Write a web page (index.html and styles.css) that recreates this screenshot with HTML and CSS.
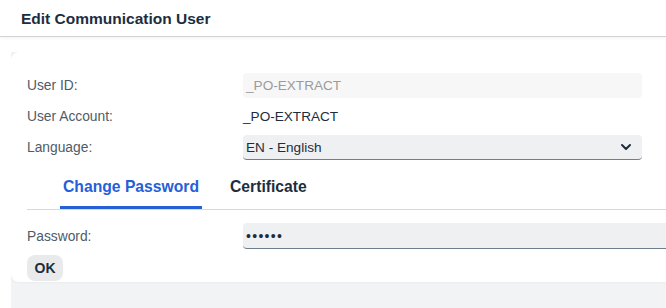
FILE: index.html
```html
<!DOCTYPE html>
<html lang="en">
<head>
    <meta charset="UTF-8">
    <meta name="viewport" content="width=device-width, initial-scale=1.0">
    <title>Edit Communication User</title>
    <link rel="stylesheet" href="styles.css">
</head>
<body>
    <header class="dialog-header">Edit Communication User</header>

    <div class="page">
        <div class="card">
            <div class="form-grid">
                <label class="label">User ID:</label>
                <div class="field field-disabled">_PO-EXTRACT</div>

                <label class="label">User Account:</label>
                <div class="value">_PO-EXTRACT</div>

                <label class="label">Language:</label>
                <div class="field field-select">
                    <span>EN - English</span>
                    <svg class="chevron" width="12" height="8" viewBox="0 0 12 8">
                        <path d="M2 2 L6 6 L10 2" fill="none" stroke="#1d2d3e" stroke-width="2" stroke-linecap="round" stroke-linejoin="round"/>
                    </svg>
                </div>
            </div>

            <div class="tabs">
                <div class="tab tab-active">Change Password</div>
                <div class="tab">Certificate</div>
            </div>

            <div class="password-row">
                <label class="label">Password:</label>
                <div class="field field-password">&bull;&bull;&bull;&bull;&bull;&bull;</div>
            </div>

            <button class="btn">OK</button>
        </div>
    </div>
</body>
</html>
```

FILE: styles.css
```css
html, body {
    margin: 0;
    height: 100%;
    overflow: hidden;
}
body {
    font-family: 'Liberation Sans', Arial, sans-serif;
    color: #1d2d3e;
    background: #ffffff;
}
.dialog-header {
    height: 36px;
    line-height: 37px;
    padding-left: 21px;
    font-size: 15.5px;
    font-weight: bold;
    border-bottom: 1px solid #d3d3d3;
    box-shadow: 0 2px 3px rgba(0, 0, 0, 0.04);
}
.page {
    margin-top: 15px;
    margin-left: 11px;
    height: 256px;
    background: #f2f3f5;
    overflow: hidden;
}
.card {
    width: 700px;
    background: #ffffff;
    border-radius: 8px 0 0 8px;
    box-shadow: 0 0 3px rgba(0, 0, 0, 0.06);
    padding: 21px 0 1px 16px;
}
.form-grid {
    display: grid;
    grid-template-columns: 216px 399px;
    grid-template-rows: 25px 37px 25px;
    align-items: center;
}
.label {
    font-size: 13.8px;
    color: #4f5b67;
}
.value {
    font-size: 13.6px;
}
.field {
    height: 25px;
    box-sizing: border-box;
    border-radius: 4px;
    font-size: 13.6px;
    display: flex;
    align-items: center;
    padding-left: 3px;
}
.field-disabled {
    background: #f7f7f7;
    color: #9b9b9b;
}
.field-select {
    background: #eef0f1;
    border-bottom: 1px solid #6d7f91;
    justify-content: space-between;
    padding-right: 10px;
}
.chevron {
    display: block;
}
.tabs {
    display: flex;
    gap: 25px;
    margin-top: 17px;
    padding-left: 33px;
    border-bottom: 1px solid #d9d9d9;
}
.tab {
    font-size: 15.7px;
    font-weight: bold;
    line-height: 20px;
    padding: 0 3px 9px;
    border-bottom: 3px solid transparent;
}
.tab-active {
    color: #2560d8;
    border-bottom-color: #2560d8;
}
.password-row {
    display: grid;
    grid-template-columns: 216px 460px;
    align-items: center;
    margin-top: 13px;
}
.field-password {
    height: 26px;
    background: #eef0f1;
    border-bottom: 1px solid #6d7f91;
    font-size: 14px;
    letter-spacing: 1.3px;
}
.btn {
    margin-top: 6px;
    width: 36px;
    height: 26px;
    border: none;
    border-radius: 8px;
    background: #e9eaec;
    color: #1d2d3e;
    font-family: inherit;
    font-size: 14px;
    font-weight: bold;
    padding: 0;
}
```
